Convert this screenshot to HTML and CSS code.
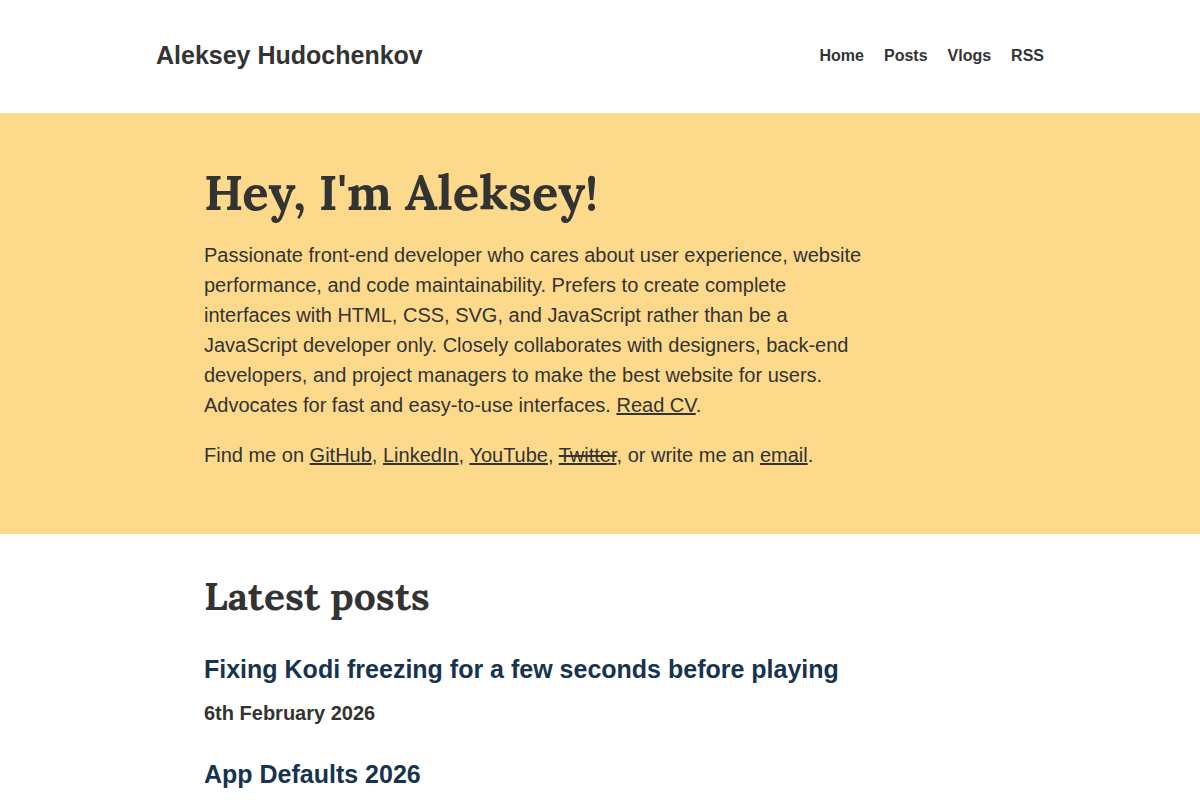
FILE: index.html
```html
<!DOCTYPE html>
<html lang="en">
<head>
    <meta charset="UTF-8">
    <meta name="viewport" content="width=device-width, initial-scale=1.0">
    <title>Aleksey Hudochenkov</title>
    <link rel="stylesheet" href="styles.css">
</head>
<body>

    <header class="site-header">
        <div class="header-inner">
            <a class="site-name" href="#">Aleksey Hudochenkov</a>
            <nav class="site-nav">
                <a href="#">Home</a>
                <a href="#">Posts</a>
                <a href="#">Vlogs</a>
                <a href="#">RSS</a>
            </nav>
        </div>
    </header>

    <section class="hero">
        <div class="content">
            <h1>Hey, I'm Aleksey!</h1>
            <p>Passionate front-end developer who cares about user experience, website performance, and code maintainability. Prefers to create complete interfaces with HTML, CSS, SVG, and JavaScript rather than be a JavaScript developer only. Closely collaborates with designers, back-end developers, and project managers to make the best website for users. Advocates for fast and easy-to-use interfaces. <a href="#">Read CV</a>.</p>
            <p>Find me on <a href="#">GitHub</a>, <a href="#">LinkedIn</a>, <a href="#">YouTube</a>, <a href="#"><s>Twitter</s></a>, or write me an <a href="#">email</a>.</p>
        </div>
    </section>

    <main class="content">
        <h2>Latest posts</h2>
        <article class="post">
            <h3><a href="#">Fixing Kodi freezing for a few seconds before playing</a></h3>
            <p class="post-date">6th February 2026</p>
        </article>
        <article class="post">
            <h3><a href="#">App Defaults 2026</a></h3>
            <p class="post-date">1st January 2026</p>
        </article>
    </main>

</body>
</html>
```

FILE: styles.css
```css
body {
    margin: 0;
    font-family: "Liberation Sans", Arial, sans-serif;
    font-size: 20px;
    line-height: 30px;
    color: #333;
    background-color: #fff;
}
a {
    color: inherit;
}
.site-header {
    height: 113px;
}
.header-inner {
    width: 888px;
    margin: 0 auto;
    height: 110px;
    display: flex;
    align-items: center;
    justify-content: space-between;
}
.site-name {
    font-size: 25px;
    font-weight: bold;
    text-decoration: none;
}
.site-nav {
    display: flex;
    gap: 20px;
    padding-top: 2px;
    font-size: 16px;
    font-weight: bold;
}
.site-nav a {
    text-decoration: none;
}
.hero {
    background-color: #fdd98b;
    padding: 47px 0 64px;
}
.content {
    width: 792px;
    margin: 0 auto;
}
.hero p {
    max-width: 662px;
    margin: 0 0 20px;
}
.hero p:last-child {
    margin-bottom: 0;
}
h1, h2 {
    font-family: Lora, "Liberation Serif", serif;
    font-weight: bold;
}
h1 {
    font-size: 49px;
    line-height: 64px;
    margin: 0 0 16px;
}
h2 {
    font-size: 39px;
    line-height: 56px;
    margin: 34px 0 28px;
}
.post h3 {
    font-size: 25px;
    line-height: 34px;
    margin: 0;
    color: #16344f;
}
.post h3 a {
    text-decoration: none;
}
.post-date {
    font-weight: bold;
    margin: 12px 0 29px;
}
```
